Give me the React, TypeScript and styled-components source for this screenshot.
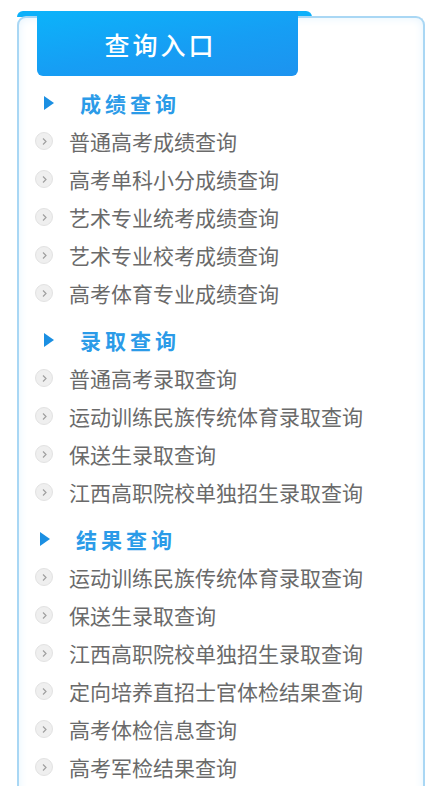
import React from 'react';
import styled, {createGlobalStyle} from 'styled-components';

const GlobalStyle = createGlobalStyle`
  body {
    margin: 0;
    background: #fff;
    font-family: "Noto Sans CJK SC", "Noto Sans", sans-serif;
  }
`;

const Page = styled.div`
  padding: 16px 10px 0 17px;
  height: 786px;
  overflow: hidden;
  box-sizing: border-box;
`;

const Panel = styled.div`
  position: relative;
  width: 408px;
  box-sizing: border-box;
  border: 2px solid #a9d7f4;
  border-bottom: none;
  border-radius: 9px 9px 0 0;
  box-shadow: inset 0 0 10px #e4f3fd;
  min-height: 800px;
`;

const Tab = styled.div`
  position: relative;
  margin: -7px 0 0 18px;
  width: 261px;
  height: 65px;
  border-radius: 0 0 6px 6px;
  background: linear-gradient(170deg, #0cb3fa 0%, #169ef4 55%, #1d93ef 100%);
  display: flex;
  align-items: center;
  justify-content: center;
  padding-right: 14px;
  box-sizing: border-box;
  color: #fff;
  font-size: 25px;
  font-weight: 500;
  letter-spacing: 3px;

  &::before {
    content: '';
    position: absolute;
    top: 0;
    left: -20px;
    right: -14px;
    height: 6px;
    border-radius: 6px 6px 0 0;
    background: #0cb0fa;
    z-index: -1;
  }
`;

const Sections = styled.div`
  padding-top: 8px;
`;

const Section = styled.div`
  & + & {
    margin-top: 9px;
  }
`;

const Heading = styled.div<{$shift: number}>`
  display: flex;
  align-items: center;
  height: 38px;
  padding-left: ${p => 25 - p.$shift}px;
  gap: 26px;
  color: #2b9be8;
  font-size: 21px;
  font-weight: 600;
  letter-spacing: 4px;
`;

const Triangle = styled.span`
  width: 0;
  height: 0;
  border-top: 7px solid transparent;
  border-bottom: 7px solid transparent;
  border-left: 10px solid #1b8fe2;
`;

const Item = styled.a`
  display: flex;
  align-items: center;
  height: 38px;
  padding-left: 16px;
  gap: 16px;
  color: #6a6a6a;
  font-size: 21px;
  text-decoration: none;
  white-space: nowrap;
`;

const Bullet = styled.span`
  flex: none;
  width: 18px;
  height: 18px;
  border-radius: 50%;
  background: #efefef;
  border: 1px solid #e2e2e2;
  box-sizing: border-box;
  display: flex;
  align-items: center;
  justify-content: center;
`;

const sections = [
  {
    title: '成绩查询',
    shift: 0,
    items: ['普通高考成绩查询', '高考单科小分成绩查询', '艺术专业统考成绩查询', '艺术专业校考成绩查询', '高考体育专业成绩查询'],
  },
  {
    title: '录取查询',
    shift: 0,
    items: ['普通高考录取查询', '运动训练民族传统体育录取查询', '保送生录取查询', '江西高职院校单独招生录取查询'],
  },
  {
    title: '结果查询',
    shift: 4,
    items: ['运动训练民族传统体育录取查询', '保送生录取查询', '江西高职院校单独招生录取查询', '定向培养直招士官体检结果查询', '高考体检信息查询', '高考军检结果查询'],
  },
];

const Chevron = () => (
  <svg width="7" height="9" viewBox="0 0 7 9">
    <path d="M2 1.5 L5 4.5 L2 7.5" fill="none" stroke="#a0a0a0" strokeWidth="1.2"/>
  </svg>
);

export default function App() {
  return <>
    <GlobalStyle/>
    <Page>
      <Panel>
        <Tab>查询入口</Tab>
        <Sections>
          {sections.map(section => <Section key={section.title}>
            <Heading $shift={section.shift}>
              <Triangle/>
              <span>{section.title}</span>
            </Heading>
            {section.items.map(item => <Item key={item} href="#">
              <Bullet><Chevron/></Bullet>
              {item}
            </Item>)}
          </Section>)}
        </Sections>
      </Panel>
    </Page>
  </>;
}
